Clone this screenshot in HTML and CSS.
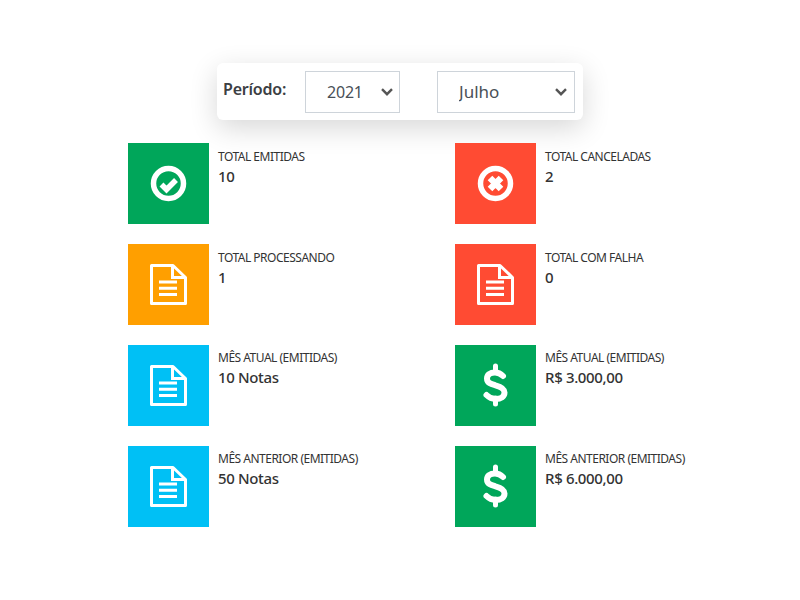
FILE: index.html
```html
<!DOCTYPE html>
<html lang="pt-BR">
<head>
  <meta charset="UTF-8">
  <title>Painel de Notas</title>
  <link rel="stylesheet" href="styles.css">
</head>
<body>
  <svg class="icon-defs" width="0" height="0">
    <symbol id="icon-doc" viewBox="0 0 81 81">
      <path d="M23.500 21.500h21.500l12.500 12v26h-34z" fill="none" stroke="#fff" stroke-width="3" stroke-linejoin="round"/>
      <path d="M44.500 21.500v12h13" fill="none" stroke="#fff" stroke-width="3"/>
      <path d="M31 38h18M31 44.300h18M31 50.600h18" fill="none" stroke="#fff" stroke-width="3"/>
    </symbol>
    <symbol id="icon-dollar" viewBox="0 0 81 81">
      <path d="M40.500 21v6M40.500 53v6" fill="none" stroke="#fff" stroke-width="5" stroke-linecap="round"/>
      <path d="M48 31C45.500 28.500 43 27.500 40 27.500c-5 0-8 2.500-8 6 0 4.500 4 5.500 8.500 6.800 5 1.300 9 3 9 7.200 0 4-3.500 6.500-9 6.500-3.500 0-6.500-1.500-9-4" fill="none" stroke="#fff" stroke-width="6" stroke-linecap="round"/>
    </symbol>
  </svg>

  <!-- filtro de período -->
  <div class="period-card">
    <label class="period-label" for="year">Período:</label>
    <select id="year" class="period-select year-select"><option>2021</option></select>
    <select id="month" class="period-select month-select"><option>Julho</option></select>
  </div>

  <!-- totais -->
  <div class="stats-grid">
    <div class="stat">
      <div class="stat-tile green">
        <svg class="stat-icon" viewBox="0 0 81 81">
          <circle cx="40.500" cy="40.500" r="15" fill="none" stroke="#fff" stroke-width="5.500"/>
          <path d="M33.500 41.500l5 5 9.500-9.500" fill="none" stroke="#fff" stroke-width="5.500"/>
        </svg>
      </div>
      <div class="stat-text"><span class="stat-label">TOTAL EMITIDAS</span><span class="stat-value">10</span></div>
    </div>
    <div class="stat">
      <div class="stat-tile red">
        <svg class="stat-icon" viewBox="0 0 81 81">
          <circle cx="40.500" cy="40.500" r="15" fill="none" stroke="#fff" stroke-width="5.500"/>
          <path d="M35 35l11 11M46 35L35 46" fill="none" stroke="#fff" stroke-width="6.500"/>
        </svg>
      </div>
      <div class="stat-text"><span class="stat-label">TOTAL CANCELADAS</span><span class="stat-value">2</span></div>
    </div>
    <div class="stat">
      <div class="stat-tile orange"><svg class="stat-icon"><use href="#icon-doc"/></svg></div>
      <div class="stat-text"><span class="stat-label">TOTAL PROCESSANDO</span><span class="stat-value">1</span></div>
    </div>
    <div class="stat">
      <div class="stat-tile red"><svg class="stat-icon"><use href="#icon-doc"/></svg></div>
      <div class="stat-text"><span class="stat-label">TOTAL COM FALHA</span><span class="stat-value">0</span></div>
    </div>
    <div class="stat stat-month">
      <div class="stat-tile blue"><svg class="stat-icon"><use href="#icon-doc"/></svg></div>
      <div class="stat-text"><span class="stat-label">MÊS ATUAL (EMITIDAS)</span><span class="stat-value">10 Notas</span></div>
    </div>
    <div class="stat stat-month">
      <div class="stat-tile green"><svg class="stat-icon"><use href="#icon-dollar"/></svg></div>
      <div class="stat-text"><span class="stat-label">MÊS ATUAL (EMITIDAS)</span><span class="stat-value">R$ 3.000,00</span></div>
    </div>
    <div class="stat stat-month">
      <div class="stat-tile blue"><svg class="stat-icon"><use href="#icon-doc"/></svg></div>
      <div class="stat-text"><span class="stat-label">MÊS ANTERIOR (EMITIDAS)</span><span class="stat-value">50 Notas</span></div>
    </div>
    <div class="stat stat-month">
      <div class="stat-tile green"><svg class="stat-icon"><use href="#icon-dollar"/></svg></div>
      <div class="stat-text"><span class="stat-label">MÊS ANTERIOR (EMITIDAS)</span><span class="stat-value">R$ 6.000,00</span></div>
    </div>
  </div>
</body>
</html>
```

FILE: styles.css
```css
/* base */
body {
  margin: 0;
  background-color: #fff;
  color: #333;
  font-family: "Noto Sans", "Open Sans", sans-serif;
}

.icon-defs {
  display: block;
  height: 0;
}

/* filtro de período */
.period-card {
  display: flex;
  align-items: center;
  width: 366px;
  height: 57px;
  margin: 63px auto 23px;
  padding: 0 8px 0 6px;
  box-sizing: border-box;
  background-color: #fff;
  border-radius: 6px;
  box-shadow: 0 8px 28px rgba(0, 0, 0, 0.16);
}
.period-label {
  width: 82px;
  margin-bottom: 5px;
  font-size: 16px;
  font-weight: 600;
  letter-spacing: -0.2px;
  color: #3c4043;
}
.period-select {
  height: 42px;
  box-sizing: border-box;
  padding: 0 0 0 21px;
  border: 1px solid #ced4da;
  border-radius: 0;
  appearance: none;
  background-color: #fff;
  background-image: url("data:image/svg+xml,%3Csvg xmlns='http://www.w3.org/2000/svg' width='12' height='8'%3E%3Cpath d='M1 1.200l5 5 5-5' fill='none' stroke='%23555' stroke-width='2.400'/%3E%3C/svg%3E");
  background-repeat: no-repeat;
  background-position: right 6px center;
  color: #495057;
  font-family: inherit;
  font-size: 16px;
}
.year-select {
  width: 95px;
  margin-right: 37px;
  letter-spacing: -0.2px;
}
.month-select {
  width: 138px;
  font-size: 17px;
  background-position: right 7px center;
}

/* totais */
.stats-grid {
  display: grid;
  grid-template-columns: 327px 327px;
  row-gap: 20px;
  padding-left: 128px;
}
.stat {
  display: flex;
}
.stat-tile {
  flex: none;
  width: 81px;
  height: 81px;
}
.stat-icon {
  display: block;
  width: 81px;
  height: 81px;
}
.stat-text {
  margin-left: 9px;
  padding-top: 6px;
}
.stat-month .stat-text {
  padding-top: 5px;
}
.stat-label {
  display: block;
  font-size: 12px;
  line-height: 16px;
  letter-spacing: -0.5px;
  color: #333;
}
.stat-value {
  display: block;
  margin-top: 1px;
  font-size: 15px;
  line-height: 20px;
  font-weight: 500;
  letter-spacing: -0.35px;
  color: #333;
}

.green { background-color: #00a65a; }
.red { background-color: #ff4b33; }
.orange { background-color: #ff9f00; }
.blue { background-color: #00c0f5; }
```
